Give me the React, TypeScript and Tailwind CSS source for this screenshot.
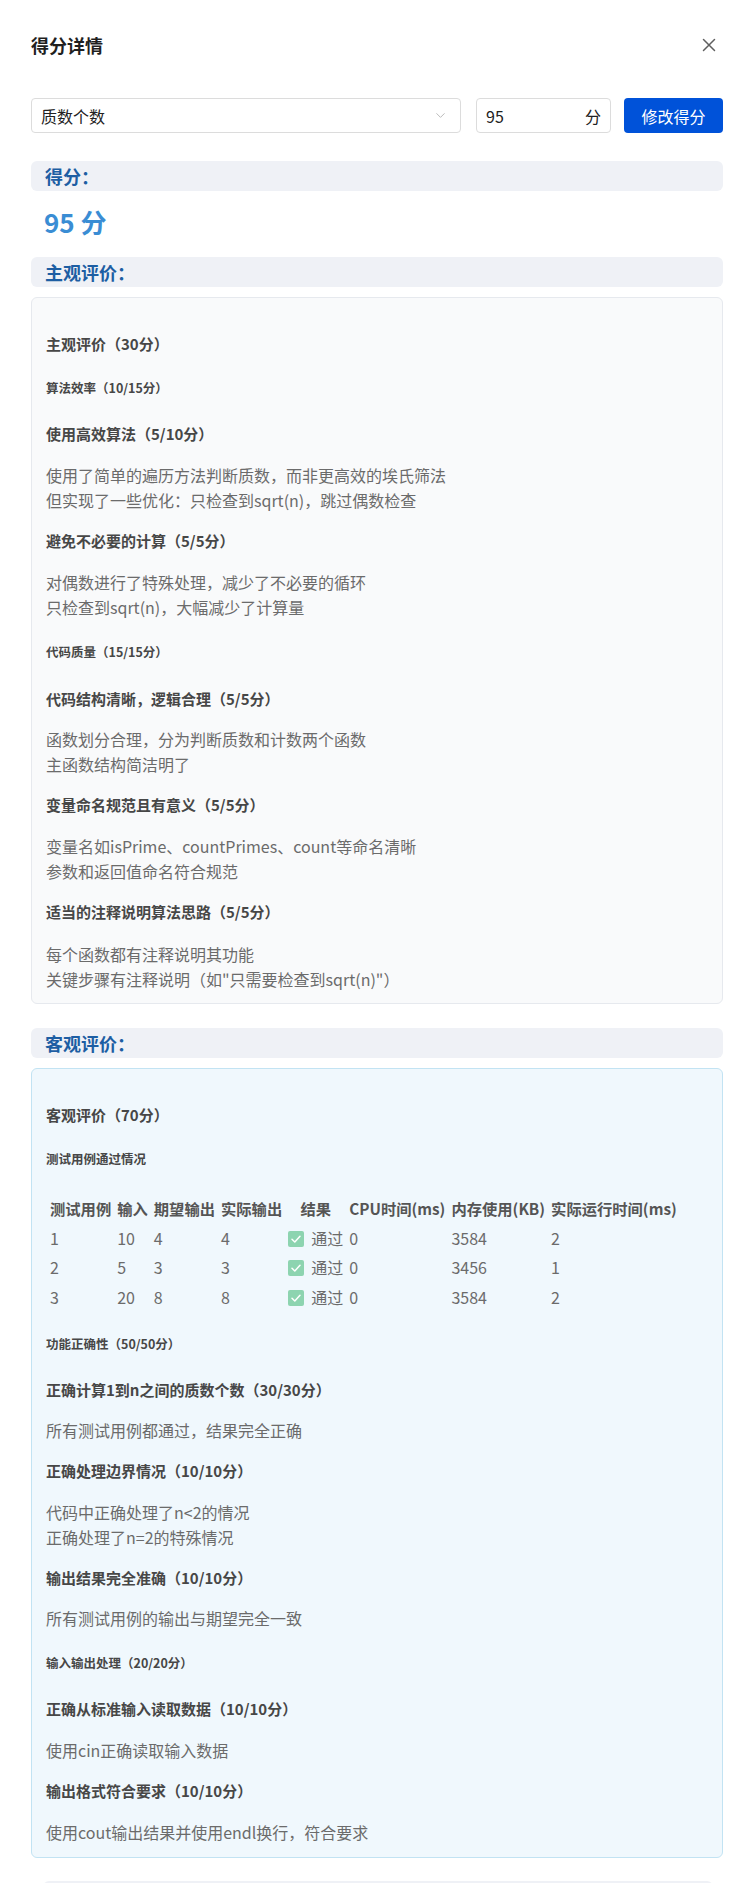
import React from "react";
import { ChevronDown } from "lucide-react";

const H3 = ({ children, mt = "" }: { children: React.ReactNode; mt?: string }) => (
  <div className={"text-[15px] font-bold leading-[20px] text-[#474747] " + mt}>{children}</div>
);
const H5 = ({ children, mt = "" }: { children: React.ReactNode; mt?: string }) => (
  <div className={"text-[12.5px] font-bold leading-[20px] text-[#474747] " + mt}>{children}</div>
);
const Body = ({ lines, mt = "" }: { lines: string[]; mt?: string }) => (
  <div className={"text-[16px] leading-[25px] text-[#6b6b6b] " + mt}>
    {lines.map((l, i) => (
      <div key={i}>{l}</div>
    ))}
  </div>
);

const Band = ({ children }: { children: React.ReactNode }) => (
  <div className="flex h-[30px] items-center rounded-[6px] bg-[#eff1f6] px-[14px] text-[18px] font-bold text-[#1d5ea3]">
    {children}
  </div>
);

const Check = () => (
  <svg width="16" height="16" viewBox="0 0 16 16" className="inline-block align-[-2px]">
    <rect x="0" y="0" width="16" height="16" rx="2" fill="#8dd4b0" />
    <path d="M4 8.3 L6.8 11 L12 5.2" fill="none" stroke="#ffffff" strokeWidth="1.5" strokeLinecap="round" strokeLinejoin="round" />
  </svg>
);

const headers = ["测试用例", "输入", "期望输出", "实际输出", "结果", "CPU时间(ms)", "内存使用(KB)", "实际运行时间(ms)"];
const rows = [
  ["1", "10", "4", "4", "0", "3584", "2"],
  ["2", "5", "3", "3", "0", "3456", "1"],
  ["3", "20", "8", "8", "0", "3584", "2"],
];

export default function App() {
  return (
    <div className="min-h-[1883px] bg-white pl-[31px] pr-[33px] pt-[33px] font-['Noto_Sans_CJK_SC',sans-serif]">
      {/* Title */}
      <div className="flex h-[24px] items-center justify-between">
        <div className="text-[18px] font-bold leading-[24px] text-[#1f1f1f]">得分详情</div>
        <svg width="14" height="14" viewBox="0 0 14 14" className="mr-[7px]">
          <path d="M1.5 1.5 L12.5 12.5 M12.5 1.5 L1.5 12.5" stroke="#5f5f5f" strokeWidth="1.5" strokeLinecap="round" />
        </svg>
      </div>

      {/* Controls */}
      <div className="mt-[41px] flex h-[35px]">
        <div className="flex flex-1 items-center justify-between rounded-[4px] border border-[#dcdcdc] bg-white pl-[9px] pr-[12px] text-[16px] text-[#222]">
          <span>质数个数</span>
          <ChevronDown size={15} strokeWidth={1.5} color="#b5b5b5" />
        </div>
        <div className="ml-[15px] flex w-[135px] items-center justify-between rounded-[4px] border border-[#dcdcdc] bg-white pl-[9px] pr-[9px] text-[16px] text-[#222]">
          <span>95</span>
          <span>分</span>
        </div>
        <button className="ml-[13px] flex w-[99px] items-center justify-center rounded-[4px] bg-[#0052d9] text-[16px] text-white">
          修改得分
        </button>
      </div>

      {/* Score */}
      <div className="mt-[28px]">
        <Band>得分：</Band>
      </div>
      <div className="mt-[15px] px-[13px] text-[26px] font-bold leading-[32px] text-[#3a8dd4]">95 分</div>

      {/* Subjective */}
      <div className="mt-[19px]">
        <Band>主观评价：</Band>
      </div>
      <div className="mt-[10px] rounded-[6px] border border-[#e6e9ee] bg-[#f9fafb] px-[14px] pb-[11.5px] pt-[36px]">
        <H3>主观评价（30分）</H3>
        <H5 mt="mt-[24px]">算法效率（10/15分）</H5>
        <H3 mt="mt-[26px]">使用高效算法（5/10分）</H3>
        <Body mt="mt-[18.5px]" lines={["使用了简单的遍历方法判断质数，而非更高效的埃氏筛法", "但实现了一些优化：只检查到sqrt(n)，跳过偶数检查"]} />
        <H3 mt="mt-[18.5px]">避免不必要的计算（5/5分）</H3>
        <Body mt="mt-[18.5px]" lines={["对偶数进行了特殊处理，减少了不必要的循环", "只检查到sqrt(n)，大幅减少了计算量"]} />
        <H5 mt="mt-[22px]">代码质量（15/15分）</H5>
        <H3 mt="mt-[27px]">代码结构清晰，逻辑合理（5/5分）</H3>
        <Body mt="mt-[18.5px]" lines={["函数划分合理，分为判断质数和计数两个函数", "主函数结构简洁明了"]} />
        <H3 mt="mt-[18px]">变量命名规范且有意义（5/5分）</H3>
        <Body mt="mt-[18.5px]" lines={["变量名如isPrime、countPrimes、count等命名清晰", "参数和返回值命名符合规范"]} />
        <H3 mt="mt-[18.5px]">适当的注释说明算法思路（5/5分）</H3>
        <Body mt="mt-[19.5px]" lines={["每个函数都有注释说明其功能", "关键步骤有注释说明（如\"只需要检查到sqrt(n)\"）"]} />
      </div>

      {/* Objective */}
      <div className="mt-[24px]">
        <Band>客观评价：</Band>
      </div>
      <div className="mt-[10px] rounded-[6px] border border-[#c2e3f3] bg-[#f0f8fd] px-[14px] pb-[12.5px] pt-[36px]">
        <H3>客观评价（70分）</H3>
        <H5 mt="mt-[24px]">测试用例通过情况</H5>
        <table className="mt-[24px] border-separate border-spacing-x-0.5 border-spacing-y-0">
          <thead>
            <tr className="h-[30px]">
              {headers.map((h) => (
                <th key={h} className="whitespace-nowrap px-0.5 text-center text-[15.3px] font-bold text-[#555]">
                  {h}
                </th>
              ))}
            </tr>
          </thead>
          <tbody>
            {rows.map((r) => (
              <tr key={r[0]} className="h-[29.5px] text-[16px] text-[#6b6b6b]">
                <td className="px-0.5 text-left">{r[0]}</td>
                <td className="px-0.5 text-left">{r[1]}</td>
                <td className="px-0.5 text-left">{r[2]}</td>
                <td className="px-0.5 text-left">{r[3]}</td>
                <td className="whitespace-nowrap px-0.5 text-left">
                  <Check />
                  <span className="ml-[7px]">通过</span>
                </td>
                <td className="px-0.5 text-left">{r[4]}</td>
                <td className="px-0.5 text-left">{r[5]}</td>
                <td className="px-0.5 text-left">{r[6]}</td>
              </tr>
            ))}
          </tbody>
        </table>
        <H5 mt="mt-[22.5px]">功能正确性（50/50分）</H5>
        <H3 mt="mt-[26px]">正确计算1到n之间的质数个数（30/30分）</H3>
        <Body mt="mt-[17.5px]" lines={["所有测试用例都通过，结果完全正确"]} />
        <H3 mt="mt-[18.5px]">正确处理边界情况（10/10分）</H3>
        <Body mt="mt-[18.5px]" lines={["代码中正确处理了n<2的情况", "正确处理了n=2的特殊情况"]} />
        <H3 mt="mt-[18.5px]">输出结果完全准确（10/10分）</H3>
        <Body mt="mt-[17.5px]" lines={["所有测试用例的输出与期望完全一致"]} />
        <H5 mt="mt-[22.5px]">输入输出处理（20/20分）</H5>
        <H3 mt="mt-[26px]">正确从标准输入读取数据（10/10分）</H3>
        <Body mt="mt-[18.5px]" lines={["使用cin正确读取输入数据"]} />
        <H3 mt="mt-[18.5px]">输出格式符合要求（10/10分）</H3>
        <Body mt="mt-[18.5px]" lines={["使用cout输出结果并使用endl换行，符合要求"]} />
      </div>

      <div className="ml-[12px] mr-[10px] mt-[23px] h-[30px] rounded-[6px] bg-[#eff1f6]" />
    </div>
  );
}
